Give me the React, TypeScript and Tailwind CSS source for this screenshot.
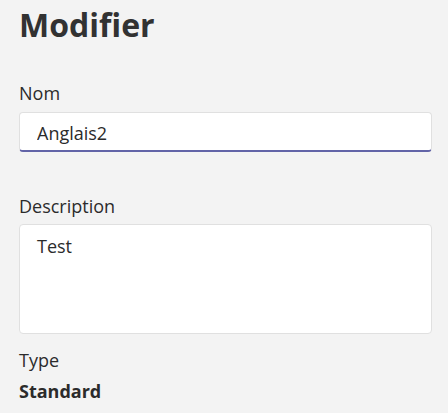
import React from "react";

export default function App() {
  return (
    <div
      className="min-h-[413px] w-[448px] bg-[#f3f3f3] pl-[19px] pr-[16px] pt-[1px] text-[#2b2b2b]"
      style={{ fontFamily: '"Open Sans", "Noto Sans", sans-serif' }}
    >
      <h1 className="text-[32px] font-bold leading-[48px] text-[#323232]">Modifier</h1>

      <div className="mt-[32px] text-[18px] leading-[24px]">Nom</div>
      <input
        readOnly
        value="Anglais2"
        className="mt-[7px] block h-[40px] w-full rounded-[4px] border border-b-2 border-[#e0e0e0] border-b-[#6264a7] bg-white pl-[17px] pt-[3px] text-[18px] leading-[24px] text-[#2b2b2b] outline-none"
      />

      <div className="mt-[42px] text-[18px] leading-[24px]">Description</div>
      <textarea
        readOnly
        value="Test"
        className="mt-[6px] block h-[110px] w-full resize-none rounded-[4px] border border-[#e0e0e0] bg-white pl-[17px] pt-[9px] text-[18px] leading-[24px] text-[#2b2b2b] outline-none"
      />

      <div className="mt-[14px] text-[18px] leading-[24px]">Type</div>
      <div className="mt-[7px] text-[18px] font-bold leading-[24px]">Standard</div>
    </div>
  );
}
